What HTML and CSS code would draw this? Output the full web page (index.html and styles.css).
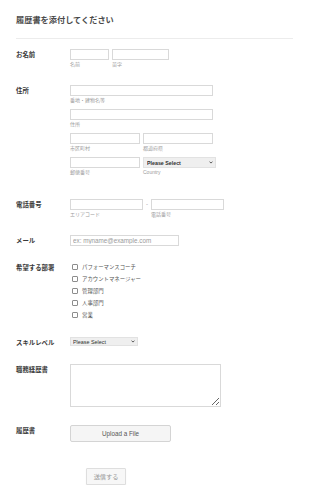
FILE: index.html
```html
<!DOCTYPE html>
<html lang="ja">
<head>
<meta charset="utf-8">
<title>履歴書を添付してください</title>
<link rel="stylesheet" href="styles.css">
</head>
<body>
<form class="form">
  <h1 class="title">履歴書を添付してください</h1>
  <ul class="fields">
    <li class="row row-name">
      <label class="lbl">お名前</label>
      <div class="ctl line">
        <span class="sf"><input class="inp w38" type="text"><span class="sub">名前</span></span>
        <span class="sf"><input class="inp w56" type="text"><span class="sub">苗字</span></span>
      </div>
    </li>
    <li class="row">
      <label class="lbl">住所</label>
      <div class="ctl stack">
        <span class="sf"><input class="inp w143" type="text"><span class="sub">番地・建物名等</span></span>
        <span class="sf"><input class="inp w143" type="text"><span class="sub">住所</span></span>
        <div class="line">
          <span class="sf"><input class="inp w70" type="text"><span class="sub">市区町村</span></span>
          <span class="sf"><input class="inp w70" type="text"><span class="sub">都道府県</span></span>
        </div>
        <div class="line">
          <span class="sf"><input class="inp w70" type="text"><span class="sub">郵便番号</span></span>
          <span class="sf">
            <span class="sel sel-country"><select><option>Please Select</option></select><svg class="chev" viewBox="0 0 8 6"><path d="M1 1.2 4 4.2 7 1.2" fill="none" stroke="#333" stroke-width="1.6"/></svg></span>
            <span class="sub sub-country">Country</span>
          </span>
        </div>
      </div>
    </li>
    <li class="row row-phone">
      <label class="lbl">電話番号</label>
      <div class="ctl line phone">
        <span class="sf"><input class="inp w73" type="text"><span class="sub">エリアコード</span></span>
        <span class="dash">-</span>
        <span class="sf"><input class="inp w73" type="text"><span class="sub">電話番号</span></span>
      </div>
    </li>
    <li class="row">
      <label class="lbl">メール</label>
      <div class="ctl"><input class="inp w109" type="text" placeholder="ex: myname@example.com"></div>
    </li>
    <li class="row row-dept">
      <label class="lbl lbl-dept">希望する部署</label>
      <div class="ctl opts">
        <label class="opt"><span class="box"></span>パフォーマンスコーチ</label>
        <label class="opt"><span class="box"></span>アカウントマネージャー</label>
        <label class="opt"><span class="box"></span>管理部門</label>
        <label class="opt"><span class="box"></span>人事部門</label>
        <label class="opt"><span class="box"></span>営業</label>
      </div>
    </li>
    <li class="row row-skill">
      <label class="lbl lbl-skill">スキルレベル</label>
      <div class="ctl">
        <span class="sel sel-skill"><select><option>Please Select</option></select><svg class="chev" viewBox="0 0 8 6"><path d="M1 1.2 4 4.2 7 1.2" fill="none" stroke="#333" stroke-width="1.6"/></svg></span>
      </div>
    </li>
    <li class="row row-text">
      <label class="lbl">職務経歴書</label>
      <div class="ctl"><textarea class="ta"></textarea></div>
    </li>
    <li class="row">
      <label class="lbl">履歴書</label>
      <div class="ctl"><button type="button" class="upload">Upload a File</button></div>
    </li>
    <li class="row row-submit">
      <button type="button" class="submit">送信する</button>
    </li>
  </ul>
</form>
</body>
</html>
```
FILE: styles.css
```css
* { box-sizing: border-box; }
html, body { margin: 0; padding: 0; background: #fff; }
body {
  font-family: "Liberation Sans", Arial, "Noto Sans CJK JP", sans-serif;
  color: #555;
}
.form { padding: 16px 17px 0 16px; }
.title {
  margin: 0;
  font-size: 8.2px;
  line-height: 10px;
  font-weight: bold;
  color: #4a4a4a;
  padding-bottom: 12px;
  border-bottom: 1px solid #ececec;
}
.fields { list-style: none; margin: 0; padding: 0; }
.row { display: flex; align-items: flex-start; margin-top: 18px; }
.row-name { margin-top: 10px; }
.row-phone { margin-top: 24px; }
.row-dept { margin-top: 15px; }
.row-skill { margin-top: 16px; }
.row-text { margin-top: 17px; }
.row-submit { margin-top: 26px; padding-left: 70px; }

.lbl {
  width: 54px;
  flex: none;
  font-size: 6.4px;
  line-height: 11px;
  font-weight: bold;
  color: #3a3a3a;
}
.lbl-dept { line-height: 12px; margin-top: 1px; }
.lbl-skill { line-height: 9px; margin-top: 1px; }
.ctl { display: flex; }
.line { display: flex; gap: 3px; }
.stack { flex-direction: column; gap: 6px; }
.line.phone { gap: 0; }
.sf { display: flex; flex-direction: column; }
.inp {
  display: block;
  height: 11px;
  margin: 0;
  padding: 0 2px;
  border: 1px solid #d9d9d9;
  border-radius: 0;
  background: #fff;
  font-family: "Liberation Sans", Arial, sans-serif;
  font-size: 6.3px;
  color: #555;
  outline: none;
}
.inp::placeholder { color: #9a9a9a; }
.w38 { width: 39px; }
.w56 { width: 57px; }
.w143 { width: 143px; }
.w70 { width: 70px; }
.w73 { width: 73px; }
.w109 { width: 109px; }
.sub {
  margin-top: 1px;
  font-family: "Noto Sans CJK JP", "Liberation Sans", sans-serif;
  font-size: 5px;
  line-height: 6px;
  color: #9c9c9c;
}
.sub-country { font-family: "Liberation Sans", Arial, sans-serif; }
.dash {
  width: 8px;
  text-align: center;
  font-size: 6px;
  line-height: 11px;
  color: #999;
}
.sel { position: relative; display: block; }
.sel select {
  display: block;
  appearance: none;
  -webkit-appearance: none;
  margin: 0;
  border: 1px solid #e2e2e2;
  border-radius: 0;
  background: #efefef;
  font-family: "Liberation Sans", Arial, sans-serif;
  color: #2f2f2f;
  outline: none;
}
.sel-country select {
  width: 73px;
  height: 11px;
  padding: 0 3px;
  font-size: 5.3px;
  font-weight: bold;
}
.sel-skill select {
  width: 68px;
  height: 9px;
  padding: 0 2px;
  font-size: 5.4px;
}
.chev {
  position: absolute;
  top: 50%;
  width: 4px;
  height: 3px;
  margin-top: -1.5px;
  pointer-events: none;
}
.sel-country .chev { right: 3px; }
.sel-skill .chev { right: 3px; }

.opts { flex-direction: column; }
.opt {
  display: flex;
  align-items: center;
  height: 12px;
  padding-left: 2px;
  font-family: "Noto Sans CJK JP", sans-serif;
  font-size: 5.4px;
  color: #555;
}
.box {
  width: 6px;
  height: 6px;
  margin-right: 4px;
  border: 1px solid #8d8d8d;
  border-radius: 1px;
  background: #fff;
}
.ta {
  display: block;
  width: 151px;
  height: 43px;
  margin: 0;
  border: 1px solid #d9d9d9;
  border-radius: 0;
  resize: both;
  outline: none;
  font-size: 6px;
}
.upload {
  display: block;
  width: 101px;
  height: 17px;
  margin: 0;
  padding: 0;
  border: 1px solid #d4d4d4;
  border-radius: 2px;
  background: #f5f5f5;
  font-family: "Liberation Sans", Arial, sans-serif;
  font-size: 6.3px;
  color: #555;
}
.submit {
  display: block;
  width: 40px;
  height: 17px;
  margin: 0;
  padding: 0;
  border: 1px solid #dedede;
  border-radius: 1px;
  background: #f7f7f7;
  box-shadow: 0 1px 1px rgba(0,0,0,0.08);
  font-family: "Noto Sans CJK JP", sans-serif;
  font-size: 6.2px;
  color: #999;
}
```
